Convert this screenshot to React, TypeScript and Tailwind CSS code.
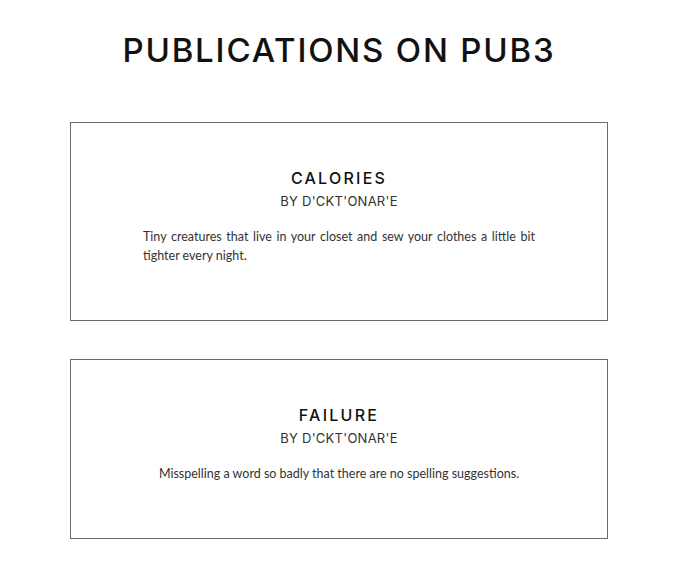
import React from "react";

const items = [
  {
    title: "CALORIES",
    body: "Tiny creatures that live in your closet and sew your clothes a little bit tighter every night.",
    align: "text-justify",
  },
  {
    title: "FAILURE",
    body: "Misspelling a word so badly that there are no spelling suggestions.",
    align: "text-center",
  },
];

export default function App() {
  return (
    <div className="min-h-screen bg-white pt-[30px] pb-10 font-['Inter','Liberation_Sans',sans-serif]">
      <h1 className="text-center text-[33px] leading-[40px] tracking-[0.055em] text-[#111] font-medium">
        PUBLICATIONS ON PUB3
      </h1>
      <div className="mt-[52px] flex flex-col items-center gap-[38px]">
        {items.map((it) => (
          <div
            key={it.title}
            className="w-[538px] border border-[#6b6b6b] px-[72px] pt-[43px] pb-[55px] text-center"
          >
            <div className="text-[16px] leading-[24px] tracking-[0.14em] text-[#111] font-medium">
              {it.title}
            </div>
            <div className="mt-[1px] text-[13px] leading-[20px] tracking-[0.02em] text-[#333]">
              BY D'CKT'ONAR'E
            </div>
            <p
              className={`mt-[16px] ${it.align} text-[12.5px] leading-[19px] text-[#333] font-['Lato','Liberation_Sans',sans-serif]`}
            >
              {it.body}
            </p>
          </div>
        ))}
      </div>
    </div>
  );
}
